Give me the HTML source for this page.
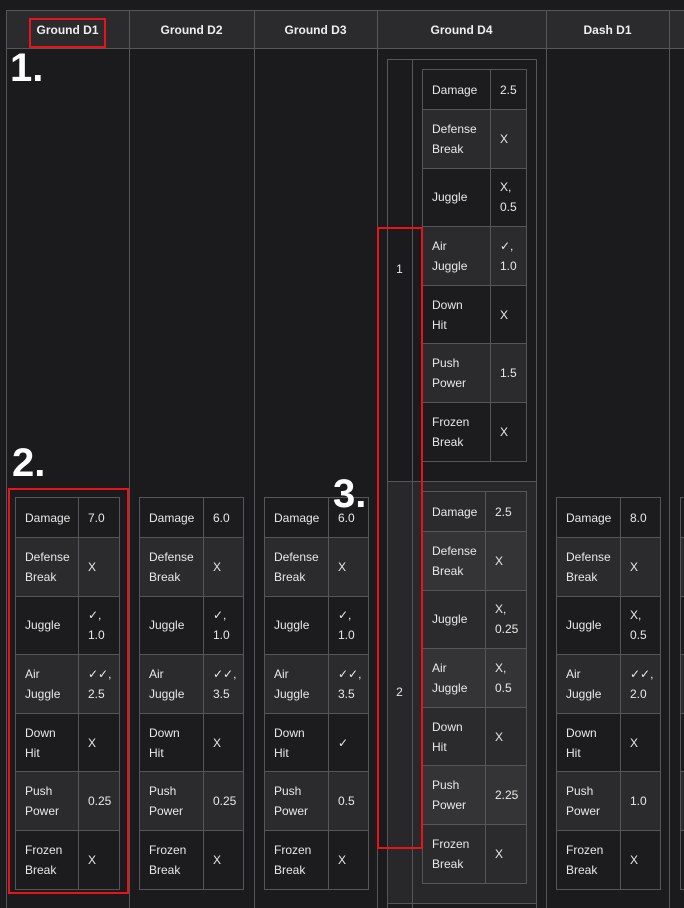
<!DOCTYPE html>
<html><head><meta charset="utf-8"><style>
body{margin:0;width:684px;height:908px;background:#1b1b1e;overflow:hidden;position:relative;font-family:"Liberation Sans","DejaVu Sans",sans-serif;color:#e6e6e6;font-size:12px}
.a{position:absolute}
.vl{position:absolute;top:10px;height:898px;width:1px;background:#55555a}
.hd{position:absolute;top:10px;height:39px;background:#2b2b2e;border-top:1px solid #55555a;border-bottom:1px solid #55555a;box-sizing:border-box}
.ht{position:absolute;top:11px;height:39px;line-height:39px;text-align:center;font-weight:bold;font-size:12px;color:#eee}
table.st{position:absolute;border-collapse:collapse;width:105px;table-layout:fixed}
.st td{border:1px solid #55555a;padding:0 0 0 9px;line-height:20px;vertical-align:middle;font-size:12px;color:#e8e8e8}
.st tr:nth-child(even) td{background:#2b2b2e}
.st tr:nth-child(odd) td{background:#1c1c1f}
.st tr.h40 td{height:39px}
.st tr.h59 td{height:57.6px}
.num{position:absolute;font-weight:bold;font-size:40px;color:#fff;font-family:"Liberation Sans",sans-serif;line-height:1}
.red{position:absolute;border:2px solid #e8141a;box-sizing:border-box}
</style></head><body>
<div class="hd" style="left:6px;width:678px"></div>
<div class="vl" style="left:6px"></div>
<div class="vl" style="left:129px"></div>
<div class="vl" style="left:254px"></div>
<div class="vl" style="left:377px"></div>
<div class="vl" style="left:546px"></div>
<div class="vl" style="left:669px"></div>
<div class="ht" style="left:6px;width:123px">Ground D1</div>
<div class="ht" style="left:129px;width:125px">Ground D2</div>
<div class="ht" style="left:254px;width:123px">Ground D3</div>
<div class="ht" style="left:377px;width:169px">Ground D4</div>
<div class="ht" style="left:546px;width:123px">Dash D1</div>

<table class="st" style="left:15px;top:497px"><colgroup><col style="width:63px"><col></colgroup>
<tr class="h40"><td>Damage</td><td>7.0</td></tr>
<tr class="h59"><td>Defense<br>Break</td><td>X</td></tr>
<tr class="h59"><td>Juggle</td><td>✓,<br>1.0</td></tr>
<tr class="h59"><td>Air<br>Juggle</td><td>✓✓,<br>2.5</td></tr>
<tr class="h59"><td>Down<br>Hit</td><td>X</td></tr>
<tr class="h59"><td>Push<br>Power</td><td>0.25</td></tr>
<tr class="h59"><td>Frozen<br>Break</td><td>X</td></tr>
</table>
<table class="st" style="left:139px;top:497px"><colgroup><col style="width:64px"><col></colgroup>
<tr class="h40"><td>Damage</td><td>6.0</td></tr>
<tr class="h59"><td>Defense<br>Break</td><td>X</td></tr>
<tr class="h59"><td>Juggle</td><td>✓,<br>1.0</td></tr>
<tr class="h59"><td>Air<br>Juggle</td><td>✓✓,<br>3.5</td></tr>
<tr class="h59"><td>Down<br>Hit</td><td>X</td></tr>
<tr class="h59"><td>Push<br>Power</td><td>0.25</td></tr>
<tr class="h59"><td>Frozen<br>Break</td><td>X</td></tr>
</table>
<table class="st" style="left:264px;top:497px"><colgroup><col style="width:64px"><col></colgroup>
<tr class="h40"><td>Damage</td><td>6.0</td></tr>
<tr class="h59"><td>Defense<br>Break</td><td>X</td></tr>
<tr class="h59"><td>Juggle</td><td>✓,<br>1.0</td></tr>
<tr class="h59"><td>Air<br>Juggle</td><td>✓✓,<br>3.5</td></tr>
<tr class="h59"><td>Down<br>Hit</td><td>✓</td></tr>
<tr class="h59"><td>Push<br>Power</td><td>0.5</td></tr>
<tr class="h59"><td>Frozen<br>Break</td><td>X</td></tr>
</table>
<table class="st" style="left:556px;top:497px"><colgroup><col style="width:64px"><col></colgroup>
<tr class="h40"><td>Damage</td><td>8.0</td></tr>
<tr class="h59"><td>Defense<br>Break</td><td>X</td></tr>
<tr class="h59"><td>Juggle</td><td>X,<br>0.5</td></tr>
<tr class="h59"><td>Air<br>Juggle</td><td>✓✓,<br>2.0</td></tr>
<tr class="h59"><td>Down<br>Hit</td><td>X</td></tr>
<tr class="h59"><td>Push<br>Power</td><td>1.0</td></tr>
<tr class="h59"><td>Frozen<br>Break</td><td>X</td></tr>
</table>
<table class="st" style="left:680px;top:497px"><colgroup><col style="width:64px"><col></colgroup>
<tr class="h40"><td>&nbsp;</td><td></td></tr>
<tr class="h59"><td></td><td></td></tr>
<tr class="h59"><td></td><td></td></tr>
<tr class="h59"><td></td><td></td></tr>
<tr class="h59"><td></td><td></td></tr>
<tr class="h59"><td></td><td></td></tr>
<tr class="h59"><td></td><td></td></tr>
</table>

<div class="a" style="left:387px;top:59px;width:150px;height:849px;box-sizing:border-box;border:1px solid #55555a;border-bottom:none"></div>
<div class="a" style="left:388px;top:481px;width:148px;height:422px;background:#28282b"></div>
<div class="a" style="left:387px;top:481px;width:150px;height:1px;background:#55555a"></div>
<div class="a" style="left:387px;top:903px;width:150px;height:1px;background:#55555a"></div>
<div class="a" style="left:412px;top:59px;width:1px;height:849px;background:#55555a"></div>
<div class="a" style="left:387px;top:262px;width:25px;text-align:center">1</div>
<div class="a" style="left:387px;top:685px;width:25px;text-align:center">2</div>
<table class="st" style="left:422px;top:69px"><colgroup><col style="width:68px"><col></colgroup>
<tr class="h40"><td>Damage</td><td>2.5</td></tr>
<tr class="h59"><td>Defense<br>Break</td><td>X</td></tr>
<tr class="h59"><td>Juggle</td><td>X,<br>0.5</td></tr>
<tr class="h59"><td>Air<br>Juggle</td><td>✓,<br>1.0</td></tr>
<tr class="h59"><td>Down<br>Hit</td><td>X</td></tr>
<tr class="h59"><td>Push<br>Power</td><td>1.5</td></tr>
<tr class="h59"><td>Frozen<br>Break</td><td>X</td></tr>
</table>
<table class="st" style="left:422px;top:491px"><colgroup><col style="width:63px"><col></colgroup>
<tr class="h40"><td style="background:#2b2b2e">Damage</td><td style="background:#2b2b2e">2.5</td></tr>
<tr class="h59"><td style="background:#343437">Defense<br>Break</td><td style="background:#343437">X</td></tr>
<tr class="h59"><td style="background:#2b2b2e">Juggle</td><td style="background:#2b2b2e">X,<br>0.25</td></tr>
<tr class="h59"><td style="background:#343437">Air<br>Juggle</td><td style="background:#343437">X,<br>0.5</td></tr>
<tr class="h59"><td style="background:#2b2b2e">Down<br>Hit</td><td style="background:#2b2b2e">X</td></tr>
<tr class="h59"><td style="background:#343437">Push<br>Power</td><td style="background:#343437">2.25</td></tr>
<tr class="h59"><td style="background:#2b2b2e">Frozen<br>Break</td><td style="background:#2b2b2e">X</td></tr>
</table>

<div class="num" style="left:10px;top:48px">1.</div>
<div class="num" style="left:12px;top:443px">2.</div>
<div class="num" style="left:333px;top:474px">3.</div>
<div class="red" style="left:29px;top:18px;width:77px;height:30px"></div>
<div class="red" style="left:8px;top:488px;width:121px;height:406px"></div>
<div class="red" style="left:377px;top:227px;width:46px;height:622px"></div>
</body></html>
